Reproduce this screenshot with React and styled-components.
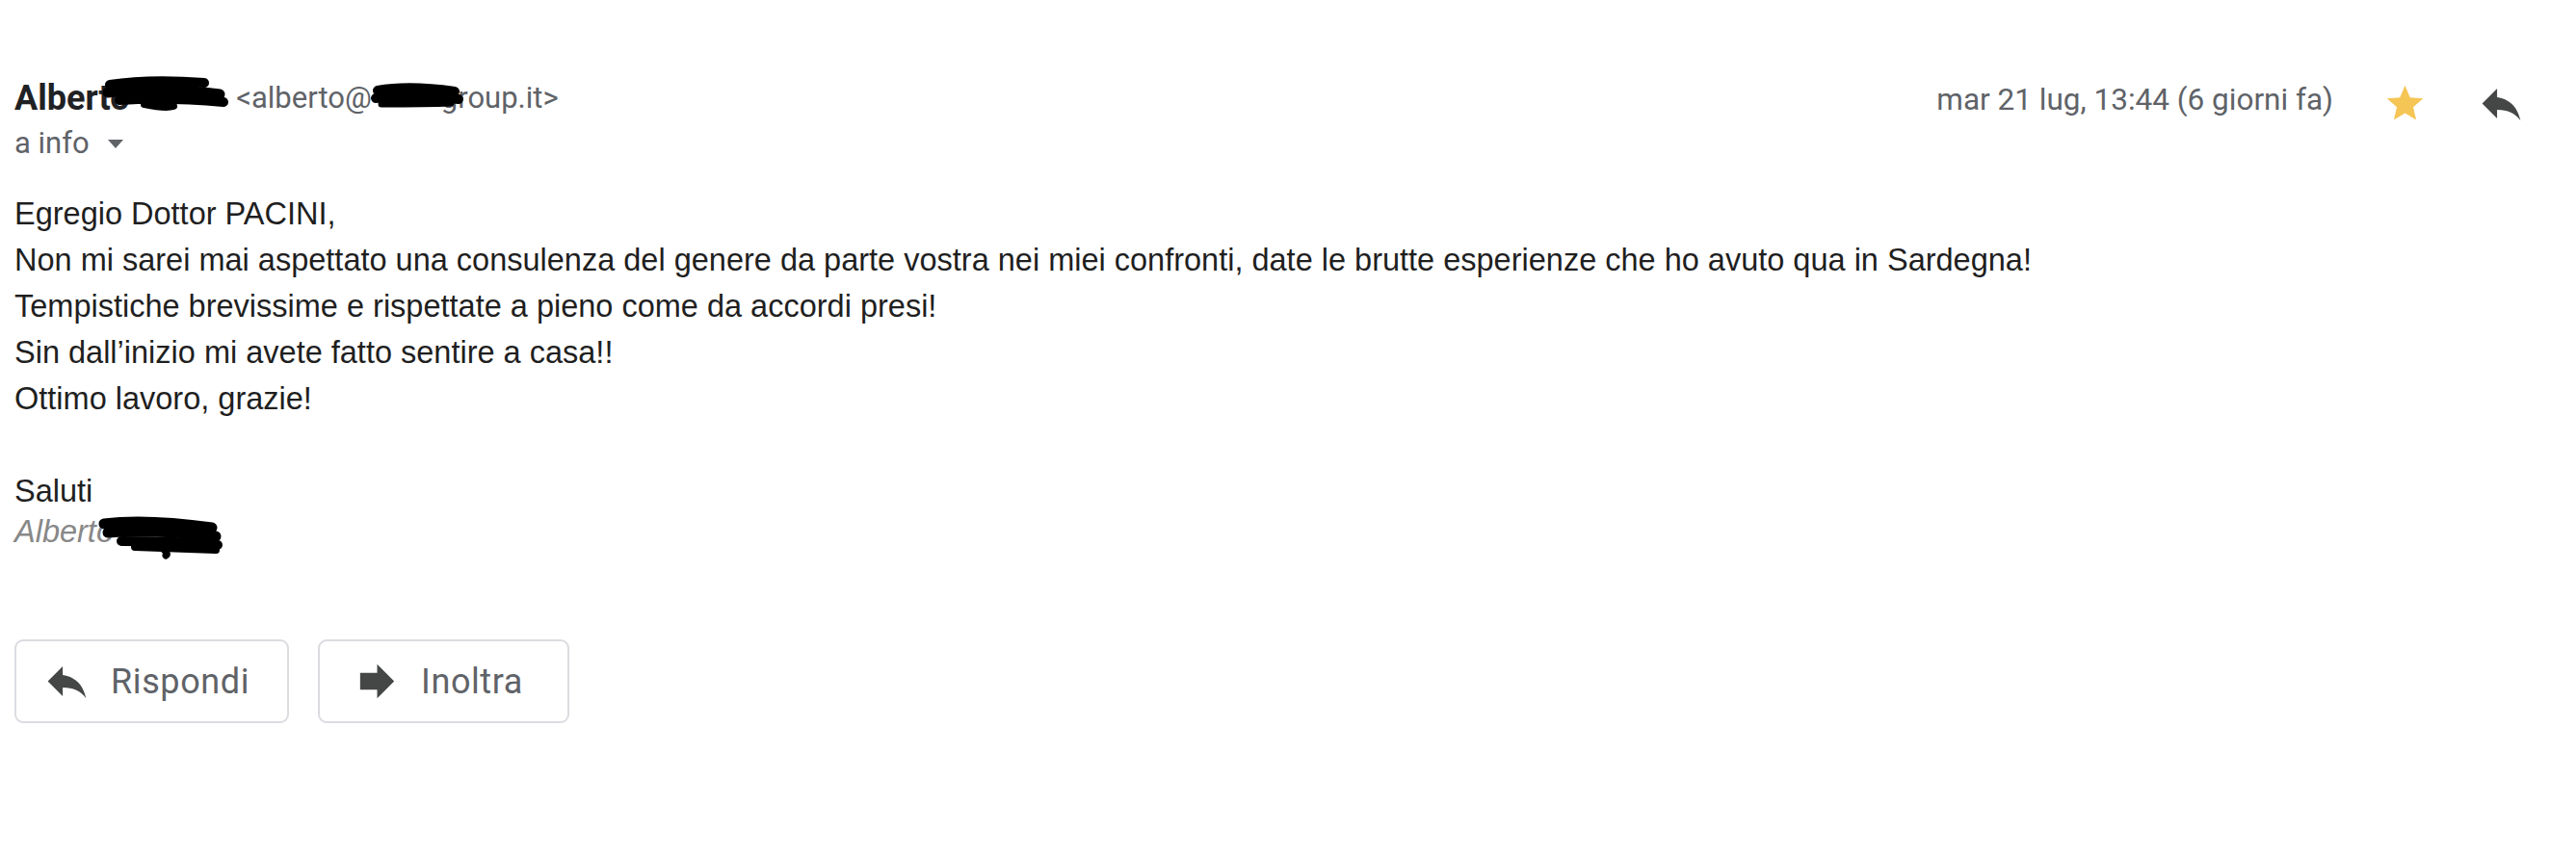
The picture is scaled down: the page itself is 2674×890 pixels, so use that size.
import React from 'react'
import styled, { createGlobalStyle } from 'styled-components'

const GlobalStyle = createGlobalStyle`
  html, body {
    margin: 0;
    padding: 0;
    background: #ffffff;
  }
  body {
    font-family: Roboto, "Liberation Sans", Arial, sans-serif;
  }
`

//------------------------------------------ icons ------------------------------------------//

const ReplyIcon = ({ size = 53, color = '#444746' }) => (
  <svg width={size} height={size} viewBox="0 0 24 24">
    <path fill={color} d="M10 9V5l-7 7 7 7v-4.1c5 0 8.5 1.6 11 5.1-1-5-4-10-11-11z" />
  </svg>
)

const ForwardIcon = ({ size = 53, color = '#444746' }) => (
  <svg width={size} height={size} viewBox="0 0 24 24">
    <path fill={color} d="M12 8V4l8 8-8 8v-4H4V8z" />
  </svg>
)

const StarIcon = ({ size = 45 }) => (
  <svg width={size} height={size} viewBox="0 0 24 24">
    <path fill="#f5c555" d="M12 17.27L18.18 21l-1.64-7.03L22 9.24l-7.19-.61L12 2 9.19 8.63 2 9.24l5.46 4.73L5.82 21z" />
  </svg>
)

const Caret = () => (
  <svg width="16" height="9" viewBox="0 0 16 9">
    <path fill="#5f6368" d="M0 0h16L8 9z" />
  </svg>
)

// scribbles that hide the surname / domain in the screenshot
const Scribble = ({ w, h, strokes, shift = 0, right = 0, lift = 0 }) => (
  <Blot
    width={w}
    height={h}
    viewBox={`0 0 ${w} ${h}`}
    $shift={shift}
    $right={right}
    $lift={lift}
  >
    {strokes.map((s, i) => (
      <path key={i} d={s.d} stroke="#000" strokeWidth={s.sw} strokeLinecap="round" fill="none" />
    ))}
  </Blot>
)

const nameStrokes = [
  { d: 'M8 9 C40 4, 80 5, 106 7', sw: 10 },
  { d: 'M6 17 C40 13, 90 14, 122 19', sw: 11 },
  { d: 'M18 25 C50 23, 92 24, 126 27', sw: 10 },
  { d: 'M44 29 C58 32, 68 33, 74 31', sw: 8 },
]

const mailStrokes = [
  { d: 'M8 8 C30 4, 60 5, 88 9', sw: 10 },
  { d: 'M6 16 C30 13, 64 14, 92 17', sw: 10 },
  { d: 'M12 22 C34 22, 60 22, 84 21', sw: 7 },
]

const signStrokes = [
  { d: 'M8 9 C40 5, 84 8, 120 13', sw: 11 },
  { d: 'M12 18 C50 15, 90 18, 124 22', sw: 11 },
  { d: 'M26 27 C60 27, 96 28, 126 31', sw: 10 },
  { d: 'M40 33 C70 34, 100 35, 124 36', sw: 8 },
  { d: 'M70 36 C74 39, 74 41, 72 42', sw: 7 },
]

//------------------------------------------ page ------------------------------------------//

const bodyLines = [
  'Egregio Dottor PACINI,',
  'Non mi sarei mai aspettato una consulenza del genere da parte vostra nei miei confronti, date le brutte esperienze che ho avuto qua in Sardegna!',
  'Tempistiche brevissime e rispettate a pieno come da accordi presi!',
  'Sin dall\u2019inizio mi avete fatto sentire a casa!!',
  'Ottimo lavoro, grazie!',
  '',
  'Saluti',
]

export default function App() {
  return (
    <>
      <GlobalStyle />
      <Page>
        <HeaderRow>
          <Sender>
            <FromLine>
              <Name>Alberto</Name>
              <Scribble w={132} h={38} strokes={nameStrokes} shift={-29} lift={-4} />
              <Mail>
                {' <alberto@'}
                <Scribble w={98} h={28} strokes={mailStrokes} shift={-2} right={-24} lift={-2} />
                {'group.it>'}
              </Mail>
            </FromLine>
            <ToLine>
              a info
              <Caret />
            </ToLine>
          </Sender>
          <Meta>
            <DateText>mar 21 lug, 13:44 (6 giorni fa)</DateText>
            <IconSlot $gap={52}>
              <StarIcon />
            </IconSlot>
            <IconSlot $gap={51}>
              <ReplyIcon />
            </IconSlot>
          </Meta>
        </HeaderRow>

        <Body>
          {bodyLines.map((line, i) => (
            <Line key={i}>{line || '\u00a0'}</Line>
          ))}
          <Signature>
            Alberto
            <Scribble w={132} h={46} strokes={signStrokes} shift={-18} lift={6} />
          </Signature>
        </Body>

        <Actions>
          <ActionButton $padLeft={26} $padRight={39}>
            <ReplyIcon />
            <span>Rispondi</span>
          </ActionButton>
          <ActionButton $padLeft={33} $padRight={46}>
            <ForwardIcon />
            <span>Inoltra</span>
          </ActionButton>
        </Actions>
      </Page>
    </>
  )
}

//------------------------------------------ style ------------------------------------------//

const Page = styled.div`
  padding: 78px 51px 0 15px;
  min-height: 890px;
  box-sizing: border-box;
`

const HeaderRow = styled.div`
  display: flex;
  justify-content: space-between;
  align-items: flex-start;
`

const Sender = styled.div`
  display: flex;
  flex-direction: column;
`

const FromLine = styled.div`
  display: flex;
  align-items: center;
  height: 48px;
  white-space: pre;
`

const Name = styled.span`
  font-size: 36px;
  font-weight: 700;
  color: #202124;
  line-height: 48px;
`

const Mail = styled.span`
  display: inline-flex;
  align-items: center;
  font-size: 31px;
  color: #5f6368;
  line-height: 48px;
`

const Blot = styled.svg`
  position: relative;
  z-index: 1;
  flex: none;
  margin-left: ${p => p.$shift}px;
  margin-right: ${p => p.$right}px;
  top: ${p => p.$lift}px;
`

const ToLine = styled.div`
  display: flex;
  align-items: center;
  gap: 19px;
  margin-top: 3px;
  font-size: 31px;
  line-height: 40px;
  color: #5f6368;
`

const Meta = styled.div`
  display: flex;
  align-items: center;
  height: 48px;
  padding-top: 2px;
`

const DateText = styled.span`
  font-size: 31.5px;
  line-height: 48px;
  color: #5f6368;
`

const IconSlot = styled.span`
  display: flex;
  margin-left: ${p => p.$gap}px;
  margin-top: 6px;
`

const Body = styled.div`
  margin-top: 29px;
  font-family: "Liberation Sans", Arial, sans-serif;
  font-size: 32.5px;
  line-height: 48px;
  color: #1f1f1f;
`

const Line = styled.div``

const Signature = styled.div`
  display: flex;
  align-items: center;
  height: 48px;
  margin-top: -6px;
  font-style: italic;
  color: #888888;
`

const Actions = styled.div`
  display: flex;
  gap: 30px;
  margin-top: 88px;
`

const ActionButton = styled.button`
  display: inline-flex;
  align-items: center;
  gap: 19px;
  box-sizing: border-box;
  height: 87px;
  padding: 0 ${p => p.$padRight}px 0 ${p => p.$padLeft}px;
  background: #ffffff;
  border: 2px solid #dadce0;
  border-radius: 9px;
  font-family: Roboto, "Liberation Sans", Arial, sans-serif;
  font-size: 36px;
  letter-spacing: 0.6px;
  color: #5f6368;
  cursor: pointer;
`
